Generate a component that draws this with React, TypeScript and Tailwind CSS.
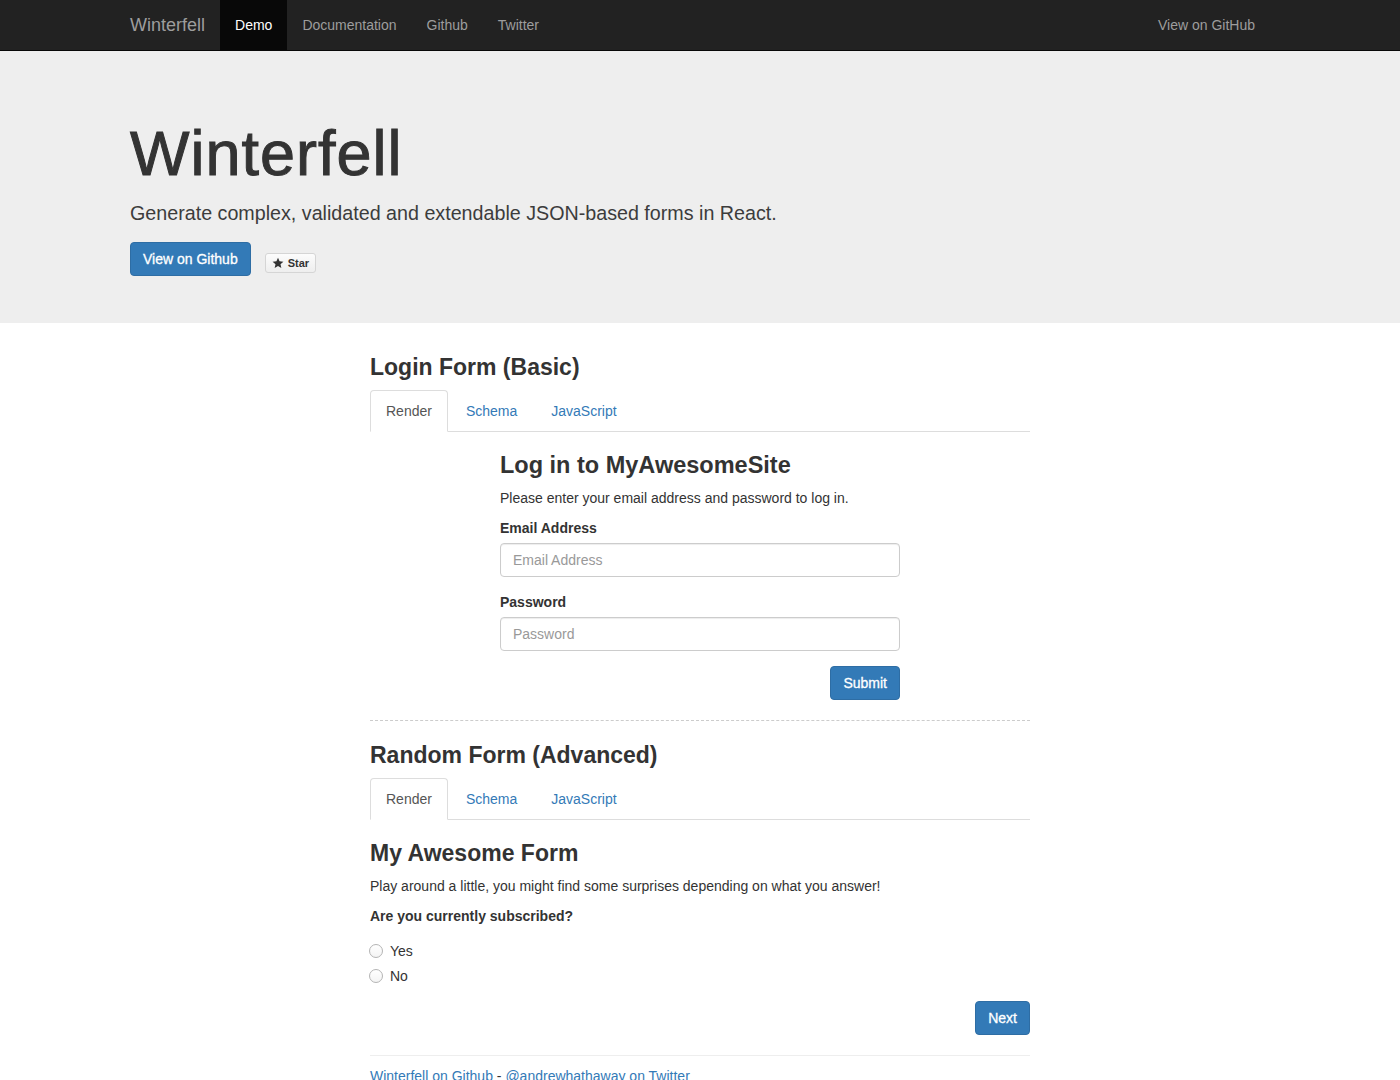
import React from "react";

const font = { fontFamily: '"Liberation Sans", Arial, Helvetica, sans-serif' };

function Tabs() {
  return (
    <div className="flex h-[42px] border-b border-[#ddd]">
      <div className="mb-[-1px] mr-[2px] h-[42px] rounded-t-[4px] border border-[#ddd] border-b-transparent bg-white px-[15px] py-[10px] text-[14px] leading-[20px] text-[#555]">
        Render
      </div>
      <div className="mb-[-1px] mr-[2px] h-[42px] border border-transparent px-[15px] py-[10px] text-[14px] leading-[20px] text-[#337ab7]">
        Schema
      </div>
      <div className="mb-[-1px] mr-[2px] h-[42px] border border-transparent px-[15px] py-[10px] text-[14px] leading-[20px] text-[#337ab7]">
        JavaScript
      </div>
    </div>
  );
}

function Input({ placeholder }: { placeholder: string }) {
  return (
    <input
      placeholder={placeholder}
      className="block h-[34px] w-full rounded-[4px] border border-[#ccc] bg-white px-[12px] py-[6px] text-[14px] text-[#555] shadow-[inset_0_1px_1px_rgba(0,0,0,0.075)] outline-none placeholder:text-[#999]"
      style={font}
    />
  );
}

function PrimaryButton({ children }: { children: React.ReactNode }) {
  return (
    <button
      className="h-[34px] rounded-[4px] border border-[#2e6da4] bg-[#337ab7] px-[12px] text-[14px] leading-[20px] text-white [-webkit-text-stroke:0.3px_#fff]"
      style={font}
    >
      {children}
    </button>
  );
}

function Radio({ label }: { label: string }) {
  return (
    <label className="flex h-[20px] items-center text-[14px] leading-[20px] text-[#333]">
      <span className="ml-[-1px] mr-[7px] inline-block h-[14px] w-[14px] rounded-full border border-[#b4b4b4] bg-gradient-to-b from-white to-[#f4f4f4]" />
      {label}
    </label>
  );
}

export default function App() {
  return (
    <div className="min-h-[1080px] bg-white text-[#333]" style={font}>
      {/* Navbar */}
      <div className="h-[51px] border-b border-[#080808] bg-[#222]">
        <div className="mx-auto flex h-[50px] w-[1140px] items-stretch">
          <div className="flex items-center pr-[15px] text-[18px] leading-[20px] text-[#9d9d9d]">Winterfell</div>
          <div className="flex items-center bg-[#080808] px-[15px] text-[14px] leading-[20px] text-white">Demo</div>
          <div className="flex items-center px-[15px] text-[14px] leading-[20px] text-[#9d9d9d]">Documentation</div>
          <div className="flex items-center px-[15px] text-[14px] leading-[20px] text-[#9d9d9d]">Github</div>
          <div className="flex items-center px-[15px] text-[14px] leading-[20px] text-[#9d9d9d]">Twitter</div>
          <div className="flex-1" />
          <div className="flex items-center px-[15px] text-[14px] leading-[20px] text-[#9d9d9d]">View on GitHub</div>
        </div>
      </div>

      {/* Jumbotron */}
      <div className="bg-[#eee] pb-[47px] pt-[68px]">
        <div className="mx-auto w-[1140px]">
          <h1 className="h-[69px] text-[63px] leading-[69px] tracking-[1px] text-[#333] [-webkit-text-stroke:1px_#333]">
            Winterfell
          </h1>
          <p className="mt-[10px] h-[30px] text-[19.7px] leading-[30px] text-[#3c3c3c]">
            Generate complex, validated and extendable JSON-based forms in React.
          </p>
          <div className="mt-[14px] flex h-[34px] items-start">
            <PrimaryButton>View on Github</PrimaryButton>
            <div className="ml-[14px] mt-[11px] flex h-[20px] items-center gap-[4px] rounded-[3px] border border-[#d5d5d5] bg-gradient-to-b from-[#fcfcfc] to-[#eee] px-[6px] text-[11px] font-bold leading-[18px] text-[#333]">
              <svg width="12" height="12" viewBox="0 0 24 24" className="mt-[-1px]">
                <path
                  fill="#333"
                  d="M12 1.5l3.1 7.1 7.7.7-5.8 5.1 1.7 7.6L12 18l-6.7 4 1.7-7.6L1.2 9.3l7.7-.7z"
                />
              </svg>
              Star
            </div>
          </div>
        </div>
      </div>

      {/* Content */}
      <div className="mx-auto w-[660px]">
        {/* Login Form */}
        <h3 className="mt-[31px] h-[26px] text-[23px] font-bold leading-[26px] text-[#333]">Login Form (Basic)</h3>
        <div className="mt-[10px]">
          <Tabs />
        </div>
        <div className="mx-auto w-[400px]">
          <h3 className="mt-[20px] h-[26px] text-[23.5px] font-bold leading-[26px] text-[#333]">Log in to MyAwesomeSite</h3>
          <p className="mt-[10px] text-[14px] leading-[20px]">Please enter your email address and password to log in.</p>
          <div className="mt-[10px]">
            <div className="mb-[5px] text-[14px] font-bold leading-[20px]">Email Address</div>
            <Input placeholder="Email Address" />
          </div>
          <div className="mt-[15px]">
            <div className="mb-[5px] text-[14px] font-bold leading-[20px]">Password</div>
            <Input placeholder="Password" />
          </div>
          <div className="mt-[15px] flex justify-end">
            <PrimaryButton>Submit</PrimaryButton>
          </div>
        </div>

        <div className="mt-[20px] border-t border-dashed border-[#ccc]" />

        {/* Random Form */}
        <h3 className="mt-[21px] h-[26px] text-[23px] font-bold leading-[26px] text-[#333]">Random Form (Advanced)</h3>
        <div className="mt-[10px]">
          <Tabs />
        </div>
        <h3 className="mt-[20px] h-[26px] text-[23px] font-bold leading-[26px] text-[#333]">My Awesome Form</h3>
        <p className="mt-[10px] text-[14px] leading-[20px]">
          Play around a little, you might find some surprises depending on what you answer!
        </p>
        <div className="mt-[10px] text-[14px] font-bold leading-[20px]">Are you currently subscribed?</div>
        <div className="mt-[15px]">
          <Radio label="Yes" />
        </div>
        <div className="mt-[5px]">
          <Radio label="No" />
        </div>
        <div className="mt-[15px] flex justify-end">
          <PrimaryButton>Next</PrimaryButton>
        </div>

        <div className="mt-[20px] border-t border-[#eee]" />
        <div className="mt-[10px] pb-[20px] text-[14px] leading-[20px]">
          <span className="text-[#337ab7]">Winterfell on Github</span>
          <span className="text-[#333]"> - </span>
          <span className="text-[#337ab7]">@andrewhathaway on Twitter</span>
        </div>
      </div>
    </div>
  );
}
